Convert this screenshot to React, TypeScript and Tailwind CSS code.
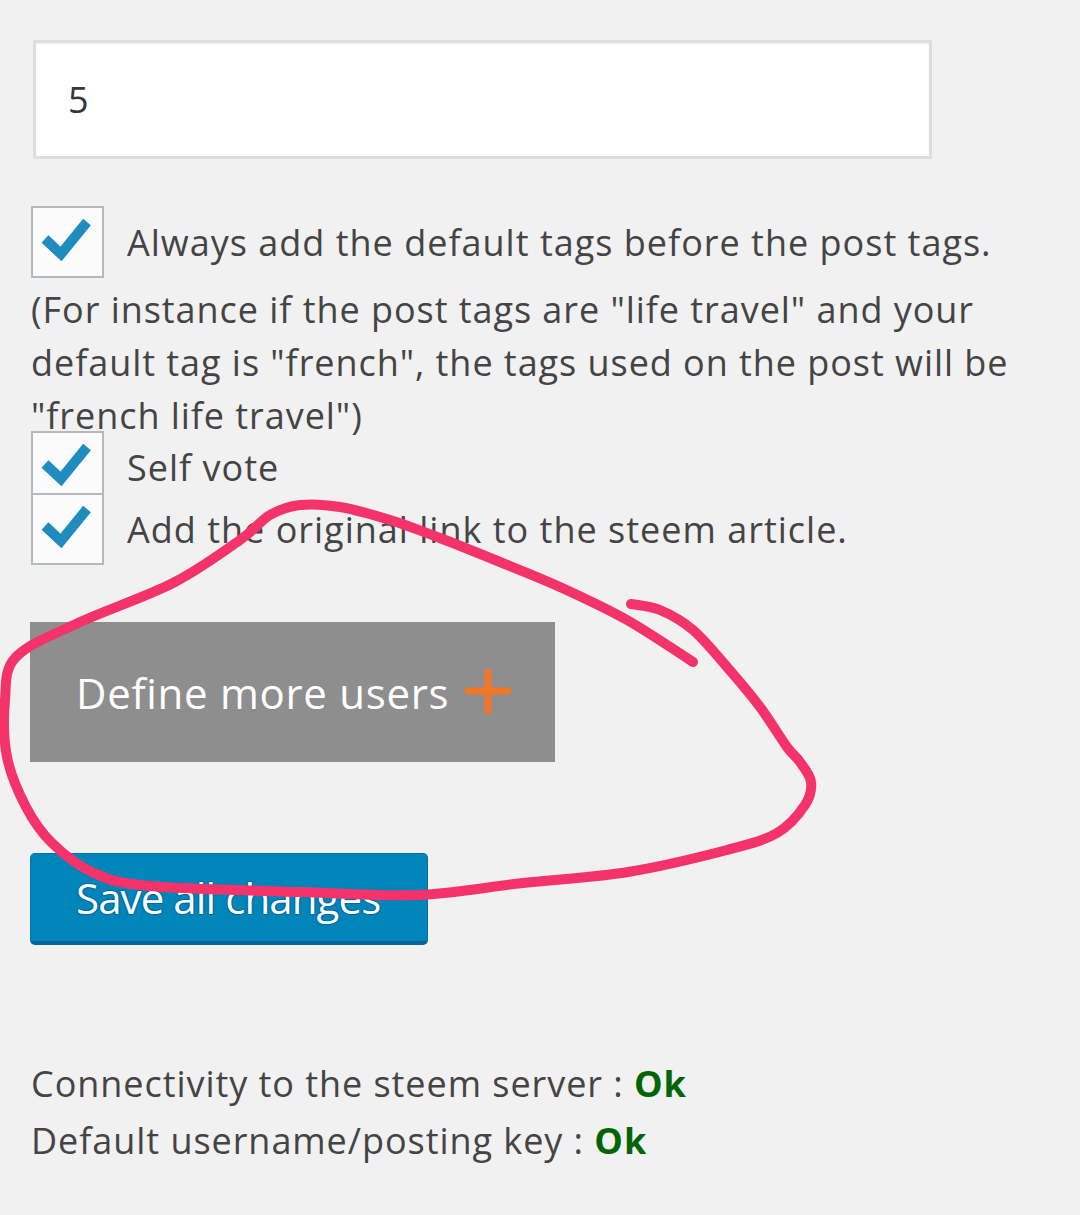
import React from 'react';

const font = { fontFamily: '"Open Sans", "Noto Sans", sans-serif' };

// freehand annotation, traced from the screenshot
const scribble: [number, number][] = [
  [693, 662], [627, 620], [560, 587], [500, 562], [440, 538], [390, 520], [340, 507],
  [300, 505], [270, 515], [240, 540], [173, 583], [78, 623], [16, 657], [5, 700],
  [7, 757], [26, 807], [52, 843], [94, 873], [150, 886], [300, 892], [418, 895],
  [523, 883], [628, 872], [727, 850], [777, 833], [805, 805], [811, 782], [800, 762],
  [787, 747], [760, 707], [727, 667], [693, 630], [660, 610], [631, 604],
];

function smoothPath(pts: [number, number][]) {
  let d = `M ${pts[0][0]} ${pts[0][1]}`;
  for (let i = 0; i < pts.length - 1; i++) {
    const p0 = pts[i - 1] || pts[i];
    const p1 = pts[i];
    const p2 = pts[i + 1];
    const p3 = pts[i + 2] || p2;
    const c1x = p1[0] + (p2[0] - p0[0]) / 6;
    const c1y = p1[1] + (p2[1] - p0[1]) / 6;
    const c2x = p2[0] - (p3[0] - p1[0]) / 6;
    const c2y = p2[1] - (p3[1] - p1[1]) / 6;
    d += ` C ${c1x} ${c1y} ${c2x} ${c2y} ${p2[0]} ${p2[1]}`;
  }
  return d;
}

function Checkbox() {
  return (
    <div className="relative z-10 w-[73px] h-[72px] shrink-0 border-2 border-[#b4b9be] bg-[#fbfbfb]">
      <svg width="69" height="68" viewBox="0 0 69 68" className="absolute left-0 top-0">
        <polyline
          points="12,31 28,46 54,14"
          fill="none"
          stroke="#1e8cbe"
          strokeWidth="10"
          strokeLinejoin="miter"
        />
      </svg>
    </div>
  );
}

function CheckRow({ label }: { label: string }) {
  return (
    <div className="flex items-center">
      <Checkbox />
      <span className="ml-[23px] text-[36px] leading-[53px] tracking-[1px] text-[#444]">{label}</span>
    </div>
  );
}

export default function App() {
  return (
    <div className="relative min-h-[1215px] w-[1080px] bg-[#f1f1f1] overflow-hidden" style={font}>
      <div className="pl-[31px] pt-[40px]">
        {/* number field */}
        <div className="ml-[2px] w-[899px] h-[119px] border-[3px] border-[#dddddd] bg-white shadow-[inset_0_1px_2px_rgba(0,0,0,0.07)] flex items-center pl-[32px]">
          <span className="text-[36px] text-[#32373c]">5</span>
        </div>

        <div className="mt-[47px]">
          <CheckRow label="Always add the default tags before the post tags." />
        </div>
        <p className="mt-[5px] text-[36px] leading-[53px] tracking-[0.95px] text-[#444] whitespace-nowrap">
          (For instance if the post tags are "life travel" and your
          <br />
          default tag is "french", the tags used on the post will be
          <br />
          "french life travel")
        </p>
        <div className="-mt-[11px]">
          <CheckRow label="Self vote" />
        </div>
        <div className="-mt-[10px]">
          <CheckRow label="Add the original link to the steem article." />
        </div>

        <button className="mt-[57px] -ml-[1px] w-[525px] h-[140px] bg-[#8e8e8e] flex items-center pl-[46px] text-white text-[42px] tracking-[0.7px]">
          Define more users
          <svg width="46" height="46" viewBox="0 0 46 46" className="ml-[16px]">
            <path d="M23 3 V42 M3 22 H43" stroke="#f07628" strokeWidth="7" strokeLinecap="round" />
          </svg>
        </button>

        <div className="mt-[91px]">
          <button className="-ml-[1px] w-[398px] h-[92px] rounded-[5px] bg-[#0085ba] border border-[#0073aa] border-b-[4px] border-b-[#006799] flex items-center pl-[45px] text-white text-[42px] tracking-[-0.9px] [text-shadow:0_-1px_1px_#006799,1px_0_1px_#006799,0_1px_1px_#006799,-1px_0_1px_#006799]">
            Save all changes
          </button>
        </div>

        <div className="mt-[110px] text-[36px] leading-[57px] tracking-[0.95px] text-[#444]">
          <div>
            Connectivity to the steem server : <b className="text-[#006505] font-bold">Ok</b>
          </div>
          <div>
            Default username/posting key : <b className="text-[#006505] font-bold">Ok</b>
          </div>
        </div>
      </div>

      <svg
        className="absolute left-0 top-0 pointer-events-none"
        width="1080"
        height="1215"
        viewBox="0 0 1080 1215"
      >
        <path
          d={smoothPath(scribble)}
          fill="none"
          stroke="#f5336b"
          strokeWidth="10"
          strokeLinecap="round"
          strokeLinejoin="round"
        />
      </svg>
    </div>
  );
}
